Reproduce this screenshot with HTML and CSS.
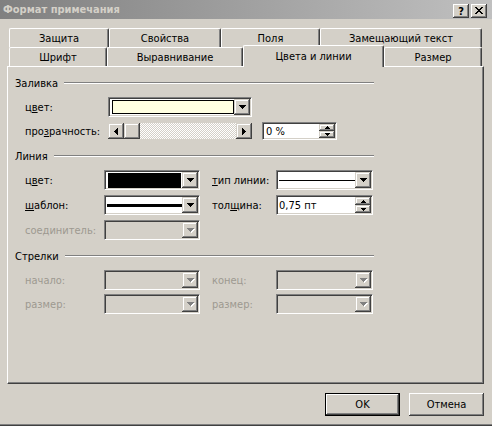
FILE: index.html
```html
<!DOCTYPE html>
<html lang="ru">
<head>
<meta charset="utf-8">
<title>Формат примечания</title>
<link rel="stylesheet" href="styles.css">
</head>
<body>
<div class="window">
  <div class="titlebar">
    <span class="title">Формат примечания</span>
    <div class="caption-btns">
      <span class="cbtn cbtn-help">?</span>
      <span class="cbtn cbtn-close"><svg width="8" height="7" viewBox="0 0 8 7" shape-rendering="crispEdges"><path d="M0 0h2v1H0zM6 0h2v1H6zM1 1h2v1H1zM5 1h2v1H5zM2 2h4v1H2zM3 3h2v1H3zM2 4h4v1H2zM1 5h2v1H1zM5 5h2v1H5zM0 6h2v1H0zM6 6h2v1H6z"/></svg></span>
    </div>
  </div>

  <div class="tabs">
    <div class="tabrow">
      <div class="tab tab-zash">Защита</div>
      <div class="tab tab-svoi">Свойства</div>
      <div class="tab tab-pol">Поля</div>
      <div class="tab tab-zam">Замещающий текст</div>
    </div>
    <div class="tabrow">
      <div class="tab tab-shr">Шрифт</div>
      <div class="tab tab-vyr">Выравнивание</div>
      <div class="tab tab-active tab-cvet">Цвета и линии</div>
      <div class="tab tab-razm">Размер</div>
    </div>
  </div>

  <div class="panel">
    <div class="group-head"><span>Заливка</span><i class="etch"></i></div>
    <div class="row row-fill1">
      <span class="lbl lbl-fill">ц<u>в</u>ет:</span>
      <div class="combo combo-fill">
        <div class="combo-val"><span class="sw-yellow"></span></div>
        <span class="drop"><i class="arr-down"></i></span>
      </div>
    </div>
    <div class="row row-fill2">
      <span class="lbl lbl-fill">про<u>з</u>рачность:</span>
      <div class="hscroll">
        <span class="raised sb-btn"><i class="arr-left"></i></span>
        <span class="raised sb-thumb"></span>
        <span class="sb-track"></span>
        <span class="raised sb-btn"><i class="arr-right"></i></span>
      </div>
      <div class="spin spin-pct">
        <span class="spin-text">0 %</span>
        <span class="spin-btns">
          <span class="raised"><i class="arr-up"></i></span>
          <span class="raised"><i class="arr-dn-s"></i></span>
        </span>
      </div>
    </div>

    <div class="group-head group-line"><span>Линия</span><i class="etch"></i></div>
    <div class="row row-first">
      <span class="lbl lbl-a">ц<u>в</u>ет:</span>
      <div class="combo combo-a">
        <div class="combo-val"><span class="sw-black"></span></div>
        <span class="drop"><i class="arr-down"></i></span>
      </div>
      <span class="lbl lbl-b"><u>т</u>ип линии:</span>
      <div class="combo combo-b">
        <div class="combo-val line-val"><span class="line-thin"></span></div>
        <span class="drop"><i class="arr-down"></i></span>
      </div>
    </div>
    <div class="row row-next">
      <span class="lbl lbl-a"><u>ш</u>аблон:</span>
      <div class="combo combo-a">
        <div class="combo-val line-val"><span class="line-thick"></span></div>
        <span class="drop"><i class="arr-down"></i></span>
      </div>
      <span class="lbl lbl-b">тол<u>щ</u>ина:</span>
      <div class="spin spin-w">
        <span class="spin-text">0,75 пт</span>
        <span class="spin-btns">
          <span class="raised"><i class="arr-up"></i></span>
          <span class="raised"><i class="arr-dn-s"></i></span>
        </span>
      </div>
    </div>
    <div class="row row-next">
      <span class="lbl lbl-a dis">соединитель:</span>
      <div class="combo combo-a combo-dis">
        <div class="combo-val"></div>
        <span class="drop"><i class="arr-down"></i></span>
      </div>
    </div>

    <div class="group-head group-arrows"><span>Стрелки</span><i class="etch"></i></div>
    <div class="row row-first">
      <span class="lbl lbl-a dis">начало:</span>
      <div class="combo combo-a combo-dis">
        <div class="combo-val"></div>
        <span class="drop"><i class="arr-down"></i></span>
      </div>
      <span class="lbl lbl-b dis">конец:</span>
      <div class="combo combo-b combo-dis">
        <div class="combo-val"></div>
        <span class="drop"><i class="arr-down"></i></span>
      </div>
    </div>
    <div class="row row-last">
      <span class="lbl lbl-a dis">размер:</span>
      <div class="combo combo-a combo-dis">
        <div class="combo-val"></div>
        <span class="drop"><i class="arr-down"></i></span>
      </div>
      <span class="lbl lbl-b dis">размер:</span>
      <div class="combo combo-b combo-dis">
        <div class="combo-val"></div>
        <span class="drop"><i class="arr-down"></i></span>
      </div>
    </div>
  </div>

  <div class="actions">
    <button class="btn btn-default" type="button">OK</button>
    <button class="btn" type="button">Отмена</button>
  </div>
</div>
</body>
</html>
```

FILE: styles.css
```css
* { box-sizing: border-box; }
html, body { margin: 0; padding: 0; }
body {
  width: 492px;
  height: 426px;
  overflow: hidden;
  background: #d4d0c8;
  font-family: Tahoma, "DejaVu Sans Condensed", "DejaVu Sans", sans-serif;
  font-size: 11px;
  color: #000;
}
u { text-decoration: underline; text-underline-offset: 1px; }

.window {
  width: 492px;
  height: 426px;
  background: #d4d0c8;
  border-bottom: 1px solid #404040;
  box-shadow: inset 0 -1px #808080;
  display: flex;
  flex-direction: column;
}

/* title bar */
.titlebar {
  flex: none;
  height: 19px;
  display: flex;
  align-items: center;
  justify-content: space-between;
  padding: 0 5px 0 3px;
  background: linear-gradient(to right, #808080, #c0c0c0);
}
.title { font-weight: bold; color: #d4d0c8; }
.caption-btns { display: flex; gap: 2px; padding-top: 2px; }
.cbtn {
  width: 16px;
  height: 14px;
  display: flex;
  align-items: center;
  justify-content: center;
  background: #d4d0c8;
  box-shadow: inset -1px -1px #404040, inset 1px 1px #fff, inset -2px -2px #808080;
}
.cbtn-help { font-weight: bold; font-size: 11px; line-height: 1; padding-top: 1px; }

/* raised 3D */
.raised {
  background: #d4d0c8;
  box-shadow: inset -1px -1px #404040, inset 1px 1px #d4d0c8, inset -2px -2px #808080, inset 2px 2px #fff;
}

/* tabs */
.tabs { flex: none; margin-top: 9px; padding-left: 9px; position: relative; z-index: 1; }
.tabrow { display: flex; align-items: flex-start; height: 19px; }
.tab {
  height: 19px;
  background: #d4d0c8;
  border-top: 1px solid #fff;
  border-left: 1px solid #fff;
  border-right: 1px solid #404040;
  box-shadow: inset -1px 0 #808080;
  border-top-left-radius: 2px;
  border-top-right-radius: 2px;
  display: flex;
  align-items: center;
  justify-content: center;
  white-space: nowrap;
}
.tab-active { height: 22px; margin-top: -2px; position: relative; z-index: 2; }
.tab-zash { width: 100px; }
.tab-svoi { width: 112px; }
.tab-pol { width: 99px; }
.tab-zam { width: 162px; }
.tab-shr { width: 98px; }
.tab-vyr { width: 136px; }
.tab-cvet { width: 141px; }
.tab-razm { width: 98px; }

/* panel */
.panel {
  flex: none;
  margin-left: 7px;
  width: 477px;
  height: 318px;
  border-top: 1px solid #fff;
  border-left: 1px solid #fff;
  border-right: 1px solid #404040;
  border-bottom: 1px solid #404040;
  box-shadow: inset -1px -1px #808080;
  padding: 9px 0 0 7px;
}
.group-head { width: 359px; height: 14px; display: flex; align-items: center; }
.etch {
  flex: 1;
  margin-left: 6px;
  height: 2px;
  border-top: 1px solid #808080;
  border-bottom: 1px solid #fff;
}
.group-line, .group-arrows { margin-top: 9px; }

.row { display: flex; align-items: center; padding-left: 10px; }
.row-fill1 { margin-top: 7px; }
.row-fill2 { margin-top: 5px; height: 18px; }
.row-first { margin-top: 7px; }
.row-next { margin-top: 5px; }
.row-last { margin-top: 4px; }

.lbl { flex: none; white-space: nowrap; }
.lbl-fill { width: 83px; }
.lbl-a { width: 79px; }
.lbl-b { width: 64px; margin-left: 12px; }
.dis { color: #9d9990; }

/* combo box */
.combo {
  flex: none;
  height: 20px;
  display: flex;
  padding: 1px;
  background: #fff;
  border: 1px solid;
  border-color: #808080 #fff #fff #808080;
  box-shadow: inset 1px 1px #404040, inset -1px -1px #d4d0c8;
}
.combo-fill { width: 144px; }
.combo-a { width: 96px; }
.combo-b { width: 97px; }
.combo-dis { background: #d4d0c8; }
.combo-val { flex: 1; display: flex; align-items: stretch; }
.drop {
  flex: none;
  width: 16px;
  display: flex;
  align-items: center;
  justify-content: center;
  background: #d4d0c8;
  box-shadow: inset -1px -1px #404040, inset 1px 1px #d4d0c8, inset -2px -2px #808080, inset 2px 2px #fff;
}
.combo-dis .arr-down { color: #808080; filter: drop-shadow(1px 1px 0 #fff); }

.sw-yellow { flex: 1; margin: 1px 0 1px 2px; border: 1px solid #000; background: #ffffe1; }
.sw-black { flex: 1; margin: 1px 1px 0 2px; background: #000; }
.line-val { align-items: center; }
.line-thin { flex: 1; height: 1px; margin-left: 1px; background: #000; }
.line-thick { flex: 1; height: 3px; margin-left: 1px; background: #000; }

/* arrows (pixel triangles) */
.arr-down, .arr-up, .arr-dn-s, .arr-left, .arr-right { display: block; color: #000; }
.arr-down {
  width: 7px; height: 4px;
  background:
    linear-gradient(currentColor, currentColor) 0 0 / 7px 1px no-repeat,
    linear-gradient(currentColor, currentColor) 1px 1px / 5px 1px no-repeat,
    linear-gradient(currentColor, currentColor) 2px 2px / 3px 1px no-repeat,
    linear-gradient(currentColor, currentColor) 3px 3px / 1px 1px no-repeat;
}
.arr-up {
  width: 5px; height: 3px;
  background:
    linear-gradient(currentColor, currentColor) 2px 0 / 1px 1px no-repeat,
    linear-gradient(currentColor, currentColor) 1px 1px / 3px 1px no-repeat,
    linear-gradient(currentColor, currentColor) 0 2px / 5px 1px no-repeat;
}
.arr-dn-s {
  width: 5px; height: 3px;
  background:
    linear-gradient(currentColor, currentColor) 0 0 / 5px 1px no-repeat,
    linear-gradient(currentColor, currentColor) 1px 1px / 3px 1px no-repeat,
    linear-gradient(currentColor, currentColor) 2px 2px / 1px 1px no-repeat;
}
.arr-left {
  width: 4px; height: 7px;
  background:
    linear-gradient(currentColor, currentColor) 0 3px / 1px 1px no-repeat,
    linear-gradient(currentColor, currentColor) 1px 2px / 1px 3px no-repeat,
    linear-gradient(currentColor, currentColor) 2px 1px / 1px 5px no-repeat,
    linear-gradient(currentColor, currentColor) 3px 0 / 1px 7px no-repeat;
}
.arr-right {
  width: 4px; height: 7px;
  background:
    linear-gradient(currentColor, currentColor) 0 0 / 1px 7px no-repeat,
    linear-gradient(currentColor, currentColor) 1px 1px / 1px 5px no-repeat,
    linear-gradient(currentColor, currentColor) 2px 2px / 1px 3px no-repeat,
    linear-gradient(currentColor, currentColor) 3px 3px / 1px 1px no-repeat;
}

/* horizontal scrollbar */
.hscroll { flex: none; width: 144px; height: 16px; display: flex; }
.sb-btn { flex: none; width: 16px; height: 16px; display: flex; align-items: center; justify-content: center; }
.sb-thumb { flex: none; width: 16px; height: 16px; }
.sb-track {
  flex: 1;
  background: repeating-conic-gradient(#fff 0 25%, #d4d0c8 0 50%) 0 0 / 2px 2px;
}

/* spin edit */
.spin {
  flex: none;
  display: flex;
  padding: 1px;
  background: #fff;
  border: 1px solid;
  border-color: #808080 #fff #fff #808080;
  box-shadow: inset 1px 1px #404040, inset -1px -1px #d4d0c8;
}
.spin-pct { width: 75px; height: 18px; margin-left: 10px; }
.spin-w { width: 97px; height: 20px; }
.spin-text { flex: 1; display: flex; align-items: center; padding-left: 2px; white-space: nowrap; }
.spin-w .spin-text { padding-left: 1px; }
.spin-btns { flex: none; width: 16px; display: flex; flex-direction: column; }
.spin-btns > span { flex: 1; display: flex; align-items: center; justify-content: center; }

/* bottom buttons */
.actions {
  flex: none;
  display: flex;
  justify-content: flex-end;
  gap: 9px;
  margin-top: 9px;
  padding-right: 8px;
}
.btn {
  width: 75px;
  height: 23px;
  margin: 0;
  padding: 0;
  border: none;
  font: inherit;
  color: #000;
  background: #d4d0c8;
  box-shadow: inset -1px -1px #404040, inset 1px 1px #fff, inset -2px -2px #808080, inset 2px 2px #d4d0c8;
}
.btn-default {
  border: 1px solid #000;
  box-shadow: inset -1px -1px #404040, inset 1px 1px #fff, inset -2px -2px #808080;
}
```
